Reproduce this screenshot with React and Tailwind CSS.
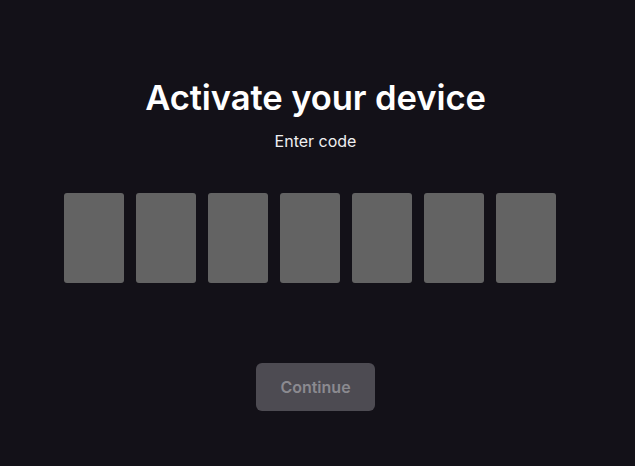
import React from "react";

export default function App() {
  const slots = [0, 1, 2, 3, 4, 5, 6];

  return (
    <div
      className="flex h-[466px] w-[635px] flex-col items-center bg-[#131118] pr-[4px] text-white"
      style={{ fontFamily: "Inter, 'Noto Sans', sans-serif" }}
    >
      {/* header */}
      <h1 className="mt-[75px] text-[34.6px] font-semibold leading-[44px] tracking-[-0.1px]">
        Activate your device
      </h1>
      <p className="mt-[12px] text-[16px] leading-[20px] text-[#efeff1]">Enter code</p>

      {/* code inputs */}
      <div className="mt-[42px] flex w-full gap-[12px] pl-[64px]">
        {slots.map((i) => (
          <input
            key={i}
            type="text"
            maxLength={1}
            className="h-[90px] w-[60px] rounded-[3px] bg-[#636363] text-center text-3xl text-white outline-none"
          />
        ))}
      </div>

      {/* action */}
      <button
        disabled
        className="mt-[80px] h-[48px] w-[119px] rounded-[6px] bg-[#4d4b52] text-[16px] font-semibold text-[#8b8a90]"
      >
        Continue
      </button>
    </div>
  );
}
